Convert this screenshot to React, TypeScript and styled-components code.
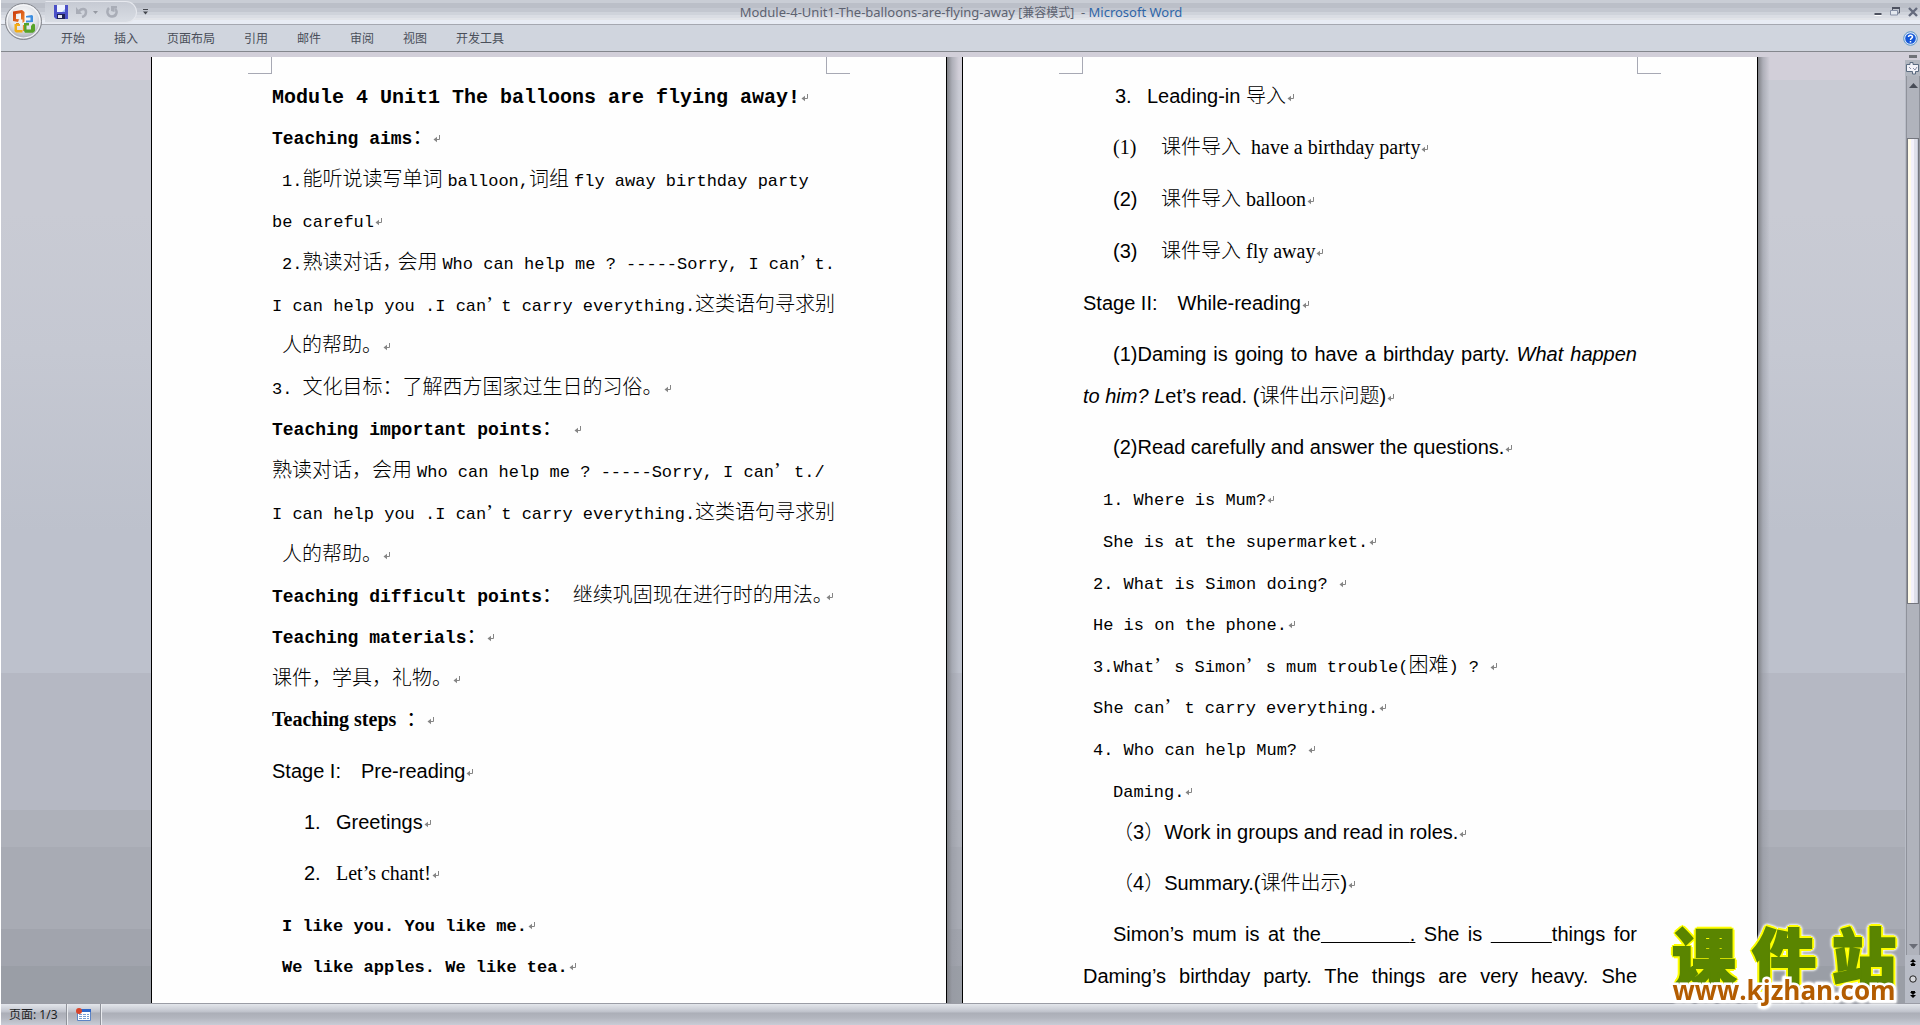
import React from "react";
import styled, { createGlobalStyle, css } from "styled-components";

const CJK = '"Noto Sans CJK SC", sans-serif';
const UI = '"Noto Sans", "Noto Sans CJK SC", sans-serif';

const GlobalStyle = createGlobalStyle`
  * { box-sizing: border-box; }
  body { margin: 0; background: #fff; font-family: ${UI}; overflow: hidden; }
  button { border: 0; padding: 0; margin: 0; background: none; font: inherit; color: inherit; cursor: default; }
`;

/* ---------- window ---------- */

const Window = styled.div`
  display: flex;
  flex-direction: column;
  height: 100vh;
  padding-left: 1px;
`;

const Header = styled.header`
  position: relative;
  flex: none;
`;

const TitleBar = styled.div`
  display: flex;
  align-items: center;
  height: 25px;
  border-bottom: 1px solid #a5a8b0;
  background: linear-gradient(#c9cdd5 0 3px, #bbbfc8 3px 8px, #c3c7d0 8px 12px, #cfd3db 12px 15px, #dadde4 15px 18px, #e2e4e9 18px 20px, #e8ecf4 20px);
`;

const QuickAccess = styled.div`
  display: flex;
  align-items: center;
  width: 92px;
  height: 22px;
  margin-left: 44px;
  padding-left: 8px;
  gap: 8px;
  border: 1px solid #e6e8ee;
  border-left-color: transparent;
  border-radius: 0 12px 12px 0;
  background: linear-gradient(#c6cad3, #d9dde4);
`;

const IconButton = styled.button`
  display: flex;
  align-items: center;
  gap: 5px;
  line-height: 0;
`;

const MoreButton = styled(IconButton)`
  margin-left: 6px;
`;

const Title = styled.h1`
  flex: 1;
  margin: 0;
  text-align: center;
  font-size: 13px;
  font-weight: 400;
  line-height: 24px;
  white-space: pre;
  color: #5d6270;
`;

const Mode = styled.span`
  font-size: 12px;
`;

const AppName = styled.span`
  color: #2f66a8;
`;

const WindowButtons = styled.div`
  display: flex;
  align-items: center;
  justify-content: flex-end;
  gap: 8px;
  width: 146px;
  height: 16px;
  padding-right: 2px;
`;

const OfficeButton = styled.button`
  position: absolute;
  left: 3px;
  top: 2px;
  line-height: 0;
`;

const TabBar = styled.nav`
  display: flex;
  align-items: center;
  height: 27px;
  padding: 0 2px 0 60px;
  gap: 29px;
  border-bottom: 1px solid #84878d;
  background: #d0d5de;
`;

const Tab = styled.button`
  font-family: ${CJK};
  font-size: 12px;
  line-height: 20px;
  color: #4a4f5a;
`;

const HelpButton = styled(IconButton)`
  margin-left: auto;
`;

/* ---------- workspace ---------- */

const Workspace = styled.main`
  display: flex;
  flex: 1;
  min-height: 0;
  background: linear-gradient(
    #d2cfd9 0 28px, #c9cbd4 28px 160px, #c5c8d2 300px, #bdc1cc 480px 621px,
    #b5b8c3 621px 758px, #aeb1ba 758px 795px, #a8abb4 795px 877px,
    #a1a4ad 877px 914px, #9a9ea6 914px);
`;

const Canvas = styled.div`
  display: flex;
  flex: 1;
  justify-content: center;
  gap: 15px;
  min-width: 0;
  padding: 5px 0 0 3px;
  overflow: hidden;
`;

const Sheet = styled.article`
  position: relative;
  flex: none;
  width: 796px;
  border: solid #000;
  border-width: 0 1px;
  background: #fefefe;
  color: #000;
  &::after {
    content: "";
    position: absolute;
    top: 0;
    bottom: 0;
    left: 100%;
    width: 12px;
    margin-left: 1px;
    background: linear-gradient(90deg, #808287, rgba(150, 153, 162, 0.6) 5px, rgba(190, 193, 203, 0));
  }
`;

const Margins = styled.div`
  display: flex;
  justify-content: space-between;
  height: 17px;
  padding: 0 96px;
`;

const Corner = styled.i<{ $side: "left" | "right" }>`
  width: 24px;
  border: solid #a7a9b4;
  border-width: ${(p) => (p.$side === "left" ? "0 1px 1px 0" : "0 0 1px 1px")};
`;

const Body = styled.div<{ $top: number }>`
  padding: ${(p) => p.$top}px 120px 0;
`;

const Line = styled.p<{ $indent?: number; $tight?: boolean; $after?: boolean }>`
  margin: 0 0 ${(p) => (p.$after ? 10 : 0)}px;
  font-family: "Liberation Sans", ${CJK};
  font-size: 20px;
  line-height: ${(p) => (p.$tight ? 41 : 42)}px;
  text-indent: ${(p) => p.$indent ?? 0}px;
  white-space: pre;
`;

const FullLine = styled(Line)`
  white-space: normal;
  text-align: justify;
  text-align-last: justify;
`;

type Face = "song" | "songBold" | "title" | "times" | "arial";

const faces: Record<Face, ReturnType<typeof css>> = {
  song: css`font-family: "Liberation Mono", monospace; font-size: 17px;`,
  songBold: css`font-family: "Liberation Mono", monospace; font-size: 18px; font-weight: 700;`,
  title: css`font-family: "Liberation Mono", monospace; font-size: 20px; font-weight: 700;`,
  times: css`font-family: "Liberation Serif", serif; font-size: 20px;`,
  arial: css`font-family: "Liberation Sans", sans-serif; font-size: 20px;`,
};

const Latin = styled.span<{ $face: Face; $bold?: boolean }>`
  ${(p) => faces[p.$face]}
  ${(p) => p.$bold && "font-weight: 700;"}
  line-height: 1;
`;

const Han = styled.span<{ $gap: boolean; $bold?: boolean }>`
  font-family: ${CJK};
  font-size: 20px;
  font-weight: ${(p) => (p.$bold ? 400 : 300)};
  line-height: 1;
  margin-right: ${(p) => (p.$gap ? 5 : 0)}px;
`;

const Cell = styled.span<{ $width: number }>`
  display: inline-block;
  width: ${(p) => p.$width}px;
  font-family: ${CJK};
  font-size: 20px;
  font-weight: 300;
  line-height: 1;
  text-indent: 0;
`;

const Apostrophe = styled(Cell)`
  font-family: "Liberation Serif", serif;
`;

const Number = styled.span<{ $width: number }>`
  display: inline-block;
  width: ${(p) => p.$width}px;
  text-indent: 0;
  line-height: 1;
`;

const Blank = styled.span`
  display: inline-block;
  line-height: 1;
  text-indent: 0;
  text-align-last: left;
  white-space: pre;
  text-decoration: underline 1px;
`;

const HAN = /([\u3000-\u303f\u4e00-\u9fff\uff00-\uffef]+)/;

/* Splits a run so that Chinese and Latin characters each get their own face. */
function Text({ face, bold, children }: { face: Face; bold?: boolean; children: string }) {
  const parts = children.split(HAN).filter(Boolean);
  return (
    <>
      {parts.map((part, i) =>
        HAN.test(part) ? (
          <Han key={i} $bold={bold} $gap={face === "song" && /^[A-Za-z]/.test(parts[i + 1] ?? "")}>
            {part}
          </Han>
        ) : (
          <Latin key={i} $face={face} $bold={bold}>
            {part}
          </Latin>
        )
      )}
    </>
  );
}

const MarkIcon = styled.svg`
  margin-left: 1px;
  overflow: visible;
`;

function Mark() {
  return (
    <MarkIcon width="8" height="9" viewBox="0 0 8 9" aria-hidden="true">
      <path d="M6.5 0V4.5H1.5" fill="none" stroke="#858585" />
      <path d="M4 1.8V7.2L0.5 4.5Z" fill="#858585" />
    </MarkIcon>
  );
}

/* ---------- scroll bar ---------- */

const ScrollBar = styled.div`
  display: flex;
  flex-direction: column;
  flex: none;
  width: 15px;
  background: #b8bcc6;
`;

const SplitHandle = styled.div`
  height: 8px;
  padding: 3px 3px 2px 4px;
  background: #d2cfd9;
  &::before {
    content: "";
    display: block;
    height: 3px;
    background: #707278;
  }
`;

const RulerButton = styled.button`
  height: 16px;
  background: #b3b7c0;
  line-height: 0;
`;

const Track = styled.div`
  display: flex;
  flex: 1;
  flex-direction: column;
  align-items: stretch;
  margin-left: 1px;
  border: solid #8f929b;
  border-width: 0 1px;
  background: #b0b3bc;
`;

const Arrow = styled.button`
  height: 18px;
  line-height: 0;
`;

const BeforeThumb = styled.div`
  flex: 44;
`;

const Thumb = styled.div`
  flex: 466;
  border: 1px solid #74767e;
  background: linear-gradient(90deg, #fffbe9 0 3px, #f4f2fb 3px 6px, #dfe0ea 6px 9px, #c6cbd8 9px);
`;

const AfterThumb = styled.div`
  flex: 335;
`;

const BrowseButtons = styled.div`
  display: flex;
  flex-direction: column;
  height: 48px;
`;

const BrowseButton = styled.button`
  flex: 1;
  line-height: 0;
`;

/* ---------- status bar ---------- */

const StatusBar = styled.footer`
  display: flex;
  flex: none;
  height: 22px;
  border-top: 1px solid #9a9ca5;
  background: linear-gradient(#e3e6eb 0, #cdd0d8 5px, #bec1ca 8px, #abaeb7 9px, #b3b6bf 14px, #c9ccd6 21px);
`;

const StatusItem = styled.button`
  display: flex;
  align-items: center;
  padding: 0 8px;
  border-right: 1px solid #8f929a;
  box-shadow: 1px 0 #e9ebef;
  font-size: 12px;
  line-height: 20px;
  color: #1d1f24;
  & + & {
    padding: 0 9px;
  }
`;

/* ---------- site mark ---------- */

const SiteMark = styled.div`
  position: fixed;
  right: 20px;
  bottom: 26px;
  width: 232px;
  filter: drop-shadow(0 0 1px #fff) drop-shadow(0 0 1px #fff);
`;

const SiteName = styled.div`
  display: flex;
  justify-content: space-between;
  padding: 0 4px;
  font-family: ${CJK};
  font-size: 64px;
  font-weight: 900;
  line-height: 54px;
  color: #5a8500;
  -webkit-text-stroke: 2px #5a8500;
  text-shadow: 3px 0 #ff0, -3px 0 #ff0, 0 3px #ff0, 0 -3px #ff0, 2px 2px #ff0, -2px 2px #ff0, 2px -2px #ff0, -2px -2px #ff0;
`;

const SiteUrl = styled.div`
  font-family: "Open Sans", sans-serif;
  font-size: 26px;
  font-weight: 700;
  line-height: 18px;
  text-align: center;
  color: #b35c00;
  -webkit-text-stroke: 5px #fff;
  paint-order: stroke fill;
`;

/* ---------- icons ---------- */

const OfficeLogo = () => (
  <svg width="40" height="40" viewBox="0 0 40 40">
    <defs>
      <radialGradient id="orb" cx="50%" cy="35%" r="65%">
        <stop offset="0" stopColor="#fff" />
        <stop offset="0.6" stopColor="#dfe1e6" />
        <stop offset="1" stopColor="#a2a5ad" />
      </radialGradient>
      <linearGradient id="red" x1="0" x2="1" y1="0" y2="1">
        <stop offset="0" stopColor="#c8330a" />
        <stop offset="1" stopColor="#f08a2c" />
      </linearGradient>
    </defs>
    <circle cx="19.5" cy="19.5" r="18" fill="url(#orb)" stroke="#85888f" />
    <circle cx="19.5" cy="19.5" r="16.5" fill="none" stroke="#f7f8fa" strokeWidth="1.2" />
    <path fillRule="evenodd" fill="url(#red)" d="M9 9.5L18 8L20.500 10V19.500L18.500 21V17.500L15 17.500L14 20L9 19ZM12 12V17L17 17.500V11.300Z" />
    <path fillRule="evenodd" fill="#3b8de0" d="M22 14L28 13L29 14V20L22 20.500V18.500H26.500V15.500H22Z" />
    <path fillRule="evenodd" fill="#f2ae16" d="M10.500 22H16V24H13V28H18.500V30.500L12 30.500L10.500 29Z" />
    <path fillRule="evenodd" fill="#56a328" d="M20 21H25V23.500H22.500V27.500H27V24L29 21.500L31 22.500V29L29 30.700H21L20 29Z" />
    <path d="M19.500 23V29M12 21.500h3" stroke="#e98b22" strokeWidth="1.200" />
  </svg>
);

const SaveIcon = () => (
  <svg width="14" height="14" viewBox="0 0 14 14">
    <path d="M0 0H14V14H2L0 12Z" fill="#4a50c8" />
    <path d="M3 0H11V7H3Z" fill="#eef3ff" />
    <path d="M8 7L11 4V7Z" fill="#9fc0f5" />
    <path d="M3 9H11V14H3Z" fill="#1d2157" />
    <path d="M4 10H8V13H4Z" fill="#e8e8f0" />
  </svg>
);

const UndoIcon = () => (
  <svg width="12" height="12" viewBox="0 0 12 12">
    <path d="M3 5C6 2 10 2.500 10 6C10 9 8 10.500 6 11" fill="none" stroke="#a9adb7" strokeWidth="2.500" />
    <path d="M0 1V8H6Z" fill="#a9adb7" />
  </svg>
);

const RedoIcon = () => (
  <svg width="12" height="12" viewBox="0 0 12 12">
    <path d="M3 2C0 5 1.500 10.500 6 10.500C10.500 10.500 12 5 9 3" fill="none" stroke="#a9adb7" strokeWidth="2.500" />
    <path d="M5 0H11V2.500H8.500V6L5 5Z" fill="#a9adb7" />
  </svg>
);

const SmallCaret = () => (
  <svg width="5" height="3" viewBox="0 0 5 3">
    <path d="M0 0H5L2.500 3Z" fill="#9599a2" />
  </svg>
);

const MoreIcon = () => (
  <svg width="5" height="6" viewBox="0 0 5 6">
    <path d="M0 0H5V1H0ZM0 2.500H5L2.500 5.500Z" fill="#45484f" />
  </svg>
);

const tabs = ["开始", "插入", "页面布局", "引用", "邮件", "审阅", "视图", "开发工具"];

export default function App() {
  return (
    <>
      <GlobalStyle />
      <Window>
        <Header>
          <TitleBar>
            <QuickAccess>
              <IconButton aria-label="保存"><SaveIcon /></IconButton>
              <IconButton aria-label="撤消"><UndoIcon /><SmallCaret /></IconButton>
              <IconButton aria-label="重复"><RedoIcon /></IconButton>
            </QuickAccess>
            <MoreButton aria-label="自定义快速访问工具栏"><MoreIcon /></MoreButton>
            <Title>
              Module-4-Unit1-The-balloons-are-flying-away <Mode>[兼容模式]</Mode>{"  - "}
              <AppName>Microsoft Word</AppName>
            </Title>
            <WindowButtons>
              <IconButton aria-label="最小化">
                <svg width="8" height="12" viewBox="0 0 8 12"><path d="M0.500 8H7.500" stroke="#4e5260" strokeWidth="2" /><path d="M0.500 9.500H7.500" stroke="#fff" /></svg>
              </IconButton>
              <IconButton aria-label="还原">
                <svg width="10" height="10" viewBox="0 0 10 10"><path d="M2.500 3V1H9.500V6H8" fill="none" stroke="#5a6072" /><path d="M2 1H10" stroke="#4e5260" strokeWidth="2" /><path d="M0.500 3.500H7.500V8H0.500Z" fill="#e4e8ef" stroke="#8790a6" /></svg>
              </IconButton>
              <IconButton aria-label="关闭">
                <svg width="10" height="10" viewBox="0 0 10 10"><path d="M1 1L9 9M9 1L1 9" stroke="#656b7d" strokeWidth="2.400" /></svg>
              </IconButton>
            </WindowButtons>
          </TitleBar>
          <TabBar>
            {tabs.map((t) => (
              <Tab key={t}>{t}</Tab>
            ))}
            <HelpButton aria-label="帮助">
              <svg width="15" height="15" viewBox="0 0 15 15">
                <circle cx="7.500" cy="7.500" r="6.800" fill="#dce9fa" stroke="#5d94c6" />
                <circle cx="7.500" cy="7.500" r="5.300" fill="#1557d8" />
                <path d="M5.500 6C5.500 3.500 9.500 3.500 9.500 6C9.500 7.200 7.500 7.200 7.500 9M7.500 10V11.500" fill="none" stroke="#fff" strokeWidth="1.500" />
              </svg>
            </HelpButton>
          </TabBar>
          <OfficeButton aria-label="Office 按钮"><OfficeLogo /></OfficeButton>
        </Header>

        <Workspace>
          <Canvas>
            <Sheet>
              <Margins><Corner $side="left" /><Corner $side="right" /></Margins>
              <Body $top={2}>
                <Line $tight><Text face="title">Module 4 Unit1 The balloons are flying away!</Text><Mark /></Line>
                <Line $tight><Text face="songBold" bold>Teaching aims：</Text><Mark /></Line>
                <Line $indent={10}><Text face="song">1.能听说读写单词balloon,词组fly away birthday party</Text></Line>
                <Line $tight><Text face="song">be careful</Text><Mark /></Line>
                <Line $indent={10}>
                  <Text face="song">2.熟读对话</Text><Cell $width={15}>，</Cell>
                  <Text face="song">会用Who can help me ? -----Sorry, I can</Text><Apostrophe $width={15}>’</Apostrophe>
                  <Text face="song">t.</Text>
                </Line>
                <Line>
                  <Text face="song">I can help you .I can</Text><Apostrophe $width={15}>’</Apostrophe>
                  <Text face="song">t carry everything.这类语句寻求别</Text>
                </Line>
                <Line $indent={10} $tight><Text face="song">人的帮助。</Text><Mark /></Line>
                <Line><Text face="song">3. 文化目标：了解西方国家过生日的习俗。</Text><Mark /></Line>
                <Line $tight><Text face="songBold" bold>Teaching important points： </Text><Mark /></Line>
                <Line>
                  <Text face="song">熟读对话，会用Who can help me ? -----Sorry, I can</Text><Apostrophe $width={20}>’</Apostrophe>
                  <Text face="song">t./</Text>
                </Line>
                <Line>
                  <Text face="song">I can help you .I can</Text><Apostrophe $width={15}>’</Apostrophe>
                  <Text face="song">t carry everything.这类语句寻求别</Text>
                </Line>
                <Line $indent={10}><Text face="song">人的帮助。</Text><Mark /></Line>
                <Line $tight>
                  <Text face="songBold" bold>Teaching difficult points： </Text>
                  <Text face="song">继续巩固现在进行时的用法</Text><Cell $width={12}>。</Cell><Mark />
                </Line>
                <Line $tight><Text face="songBold" bold>Teaching materials：</Text><Mark /></Line>
                <Line><Text face="song">课件，学具，礼物。</Text><Mark /></Line>
                <Line $after $tight><Text face="times" bold>Teaching steps  ：</Text><Mark /></Line>
                <Line $after><Text face="arial">Stage I:　Pre-reading</Text><Mark /></Line>
                <Line $after $tight $indent={32}><Number $width={32}>1.</Number><Text face="arial">Greetings</Text><Mark /></Line>
                <Line $after $tight $indent={32}><Number $width={32}>2.</Number><Text face="times">Let’s chant!</Text><Mark /></Line>
                <Line $tight $indent={10}><Text face="song" bold>I like you. You like me.</Text><Mark /></Line>
                <Line $tight $indent={10}><Text face="song" bold>We like apples. We like tea.</Text><Mark /></Line>
              </Body>
            </Sheet>

            <Sheet>
              <Margins><Corner $side="left" /><Corner $side="right" /></Margins>
              <Body $top={1}>
                <Line $after $indent={32}><Number $width={32}>3.</Number><Text face="arial">Leading-in 导入</Text><Mark /></Line>
                <Line $after $tight $indent={30}>
                  <Number $width={48}><Text face="times">(1)</Text></Number>
                  <Text face="times">课件导入  have a birthday party</Text><Mark />
                </Line>
                <Line $after $indent={30}><Number $width={48}>(2)</Number><Text face="times">课件导入 balloon</Text><Mark /></Line>
                <Line $after $indent={30}><Number $width={48}>(3)</Number><Text face="times">课件导入 fly away</Text><Mark /></Line>
                <Line $after><Text face="arial">Stage II:　While-reading</Text><Mark /></Line>
                <FullLine $tight $indent={30}>
                  (1)Daming is going to have a birthday party. <em>What happen</em>
                </FullLine>
                <Line $after>
                  <em>to him? L</em>et’s read. <Text face="arial">(课件出示问题)</Text><Mark />
                </Line>
                <Line $after $tight $indent={30}>(2)Read carefully and answer the questions.<Mark /></Line>
                <Line $indent={20} $tight><Text face="song">1. Where is Mum?</Text><Mark /></Line>
                <Line $indent={20}><Text face="song">She is at the supermarket.</Text><Mark /></Line>
                <Line $indent={10}><Text face="song">2. What is Simon doing? </Text><Mark /></Line>
                <Line $indent={10} $tight><Text face="song">He is on the phone.</Text><Mark /></Line>
                <Line $indent={10}>
                  <Text face="song">3.What</Text><Apostrophe $width={20}>’</Apostrophe>
                  <Text face="song">s Simon</Text><Apostrophe $width={20}>’</Apostrophe>
                  <Text face="song">s mum trouble(困难) ? </Text><Mark />
                </Line>
                <Line $indent={10} $tight>
                  <Text face="song">She can</Text><Apostrophe $width={20}>’</Apostrophe>
                  <Text face="song">t carry everything.</Text><Mark />
                </Line>
                <Line $indent={10}><Text face="song">4. Who can help Mum? </Text><Mark /></Line>
                <Line $indent={30}><Text face="song">Daming.</Text><Mark /></Line>
                <Line $after $indent={30}><Text face="arial">（3）Work in groups and read in roles.</Text><Mark /></Line>
                <Line $after $tight $indent={30}><Text face="arial">（4）Summary.(课件出示)</Text><Mark /></Line>
                <FullLine $tight $indent={30}>
                  Simon’s mum is at the<Blank>{"\u00a0".repeat(16)}.</Blank> She is <Blank>{"\u00a0".repeat(11)}</Blank>things for
                </FullLine>
                <FullLine>Daming’s birthday party. The things are very heavy. She</FullLine>
              </Body>
            </Sheet>
          </Canvas>

          <ScrollBar>
            <SplitHandle />
            <RulerButton aria-label="标尺">
              <svg width="13" height="13" viewBox="0 0 13 13">
                <path d="M0.500 2.500H4V0.500H7V2.500H12.500V9.500H9.500V12H6.500V9.500H0.500Z" fill="#f3f2f8" stroke="#5b6b80" />
                <path d="M3 5l2 2M7 6l2 2 2-3" stroke="#8b90a8" fill="none" />
              </svg>
            </RulerButton>
            <Track>
              <Arrow aria-label="向上滚动"><svg width="9" height="5" viewBox="0 0 9 5"><path d="M4.500 0L9 5H0Z" fill="#484c57" /></svg></Arrow>
              <BeforeThumb />
              <Thumb />
              <AfterThumb />
              <Arrow aria-label="向下滚动"><svg width="9" height="5" viewBox="0 0 9 5"><path d="M0 0H9L4.500 5Z" fill="#6a6d77" /></svg></Arrow>
            </Track>
            <BrowseButtons>
              <BrowseButton aria-label="前一页"><svg width="6" height="8" viewBox="0 0 6 8"><path d="M3 0L6 3H0ZM3 3L6 6H0ZM1 6H5V7H1Z" fill="#000" /></svg></BrowseButton>
              <BrowseButton aria-label="选择浏览对象"><svg width="8" height="8" viewBox="0 0 8 8"><circle cx="4" cy="4" r="3.200" fill="#d5d7dc" stroke="#222" /></svg></BrowseButton>
              <BrowseButton aria-label="下一页"><svg width="6" height="8" viewBox="0 0 6 8"><path d="M1 0H5V1H1ZM0 1H6L3 4ZM0 4H6L3 7Z" fill="#000" /></svg></BrowseButton>
            </BrowseButtons>
          </ScrollBar>
        </Workspace>

        <StatusBar>
          <StatusItem>页面: 1/3</StatusItem>
          <StatusItem aria-label="宏录制">
            <svg width="15" height="13" viewBox="0 0 15 13">
              <path d="M2.500 1.500H14.500V12.500H1.500V5" fill="#fff" stroke="#5d84c4" />
              <path d="M5 1H15V4H5Z" fill="#2f66c8" />
              <path d="M3 6.500H13M3 8.500H13M3 10.500H13" stroke="#7a9fd4" strokeDasharray="3 1" />
              <circle cx="3" cy="3" r="3" fill="#d8442a" />
            </svg>
          </StatusItem>
        </StatusBar>
      </Window>
      <SiteMark>
        <SiteName><span>课</span><span>件</span><span>站</span></SiteName>
        <SiteUrl>www.kjzhan.com</SiteUrl>
      </SiteMark>
    </>
  );
}
